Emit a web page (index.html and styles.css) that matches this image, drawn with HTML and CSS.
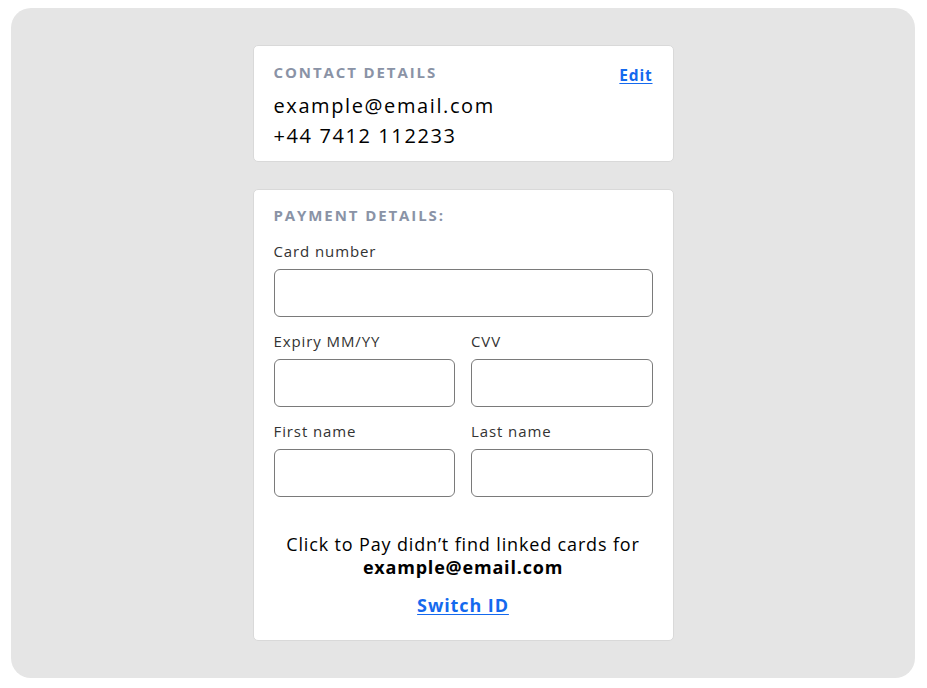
FILE: index.html
```html
<!DOCTYPE html>
<html lang="en">
<head>
<meta charset="utf-8">
<title>Checkout</title>
<link rel="stylesheet" href="styles.css">
</head>
<body>
<div class="frame">
  <section class="card contact">
    <div class="contact-head">
      <h2 class="section-title">CONTACT DETAILS</h2>
      <a class="link edit" href="#">Edit</a>
    </div>
    <p class="contact-line">example@email.com</p>
    <p class="contact-line">+44 7412 112233</p>
  </section>

  <section class="card payment">
    <h2 class="section-title">PAYMENT DETAILS:</h2>
    <div class="field">
      <label class="field-label">Card number</label>
      <div class="input"></div>
    </div>
    <div class="row">
      <div class="field">
        <label class="field-label">Expiry MM/YY</label>
        <div class="input"></div>
      </div>
      <div class="field">
        <label class="field-label">CVV</label>
        <div class="input"></div>
      </div>
    </div>
    <div class="row">
      <div class="field">
        <label class="field-label">First name</label>
        <div class="input"></div>
      </div>
      <div class="field">
        <label class="field-label">Last name</label>
        <div class="input"></div>
      </div>
    </div>
    <p class="notice">Click to Pay didn’t find linked cards for<br><strong>example@email.com</strong></p>
    <a class="link switch" href="#">Switch ID</a>
  </section>
</div>
</body>
</html>
```

FILE: styles.css
```css
* { box-sizing: border-box; }
html, body { margin: 0; padding: 0; background: #ffffff; }
body {
  font-family: "Open Sans", "Noto Sans", "Liberation Sans", sans-serif;
  color: #000;
}
.frame {
  margin: 8px 12px 0 11px;
  height: 670px;
  background: #e5e5e5;
  border-radius: 20px;
  padding-top: 37px;
  display: flex;
  flex-direction: column;
  align-items: center;
  gap: 27px;
}
.card {
  width: 421px;
  background: #fff;
  border: 1px solid #d9d9d9;
  border-radius: 5px;
  padding: 0 20px;
}
.contact { height: 117px; padding-top: 16px; }
.contact-head {
  display: flex;
  justify-content: space-between;
  align-items: flex-start;
}
.section-title {
  margin: 0;
  font-size: 15px;
  font-weight: 700;
  letter-spacing: 1.9px;
  color: #8a93a6;
  line-height: 20px;
}
.link {
  color: #1469ee;
  font-weight: 700;
  text-decoration: underline;
  text-underline-offset: 2px;
}
.edit { font-size: 15.5px; line-height: 20px; margin-top: 3px; letter-spacing: 0.8px; }
.contact-line {
  margin: 0;
  font-size: 20px;
  line-height: 30px;
  letter-spacing: 1.6px;
}
.contact-head + .contact-line { margin-top: 6px; }
.payment { height: 452px; padding-top: 15px; display: flex; flex-direction: column; }
.payment .section-title { margin-bottom: 16px; }
.field { display: flex; flex-direction: column; }
.row .field { flex: 1; }
.field-label {
  font-size: 15px;
  color: #333;
  line-height: 20px;
  margin-bottom: 8px;
  letter-spacing: 0.9px;
}
.input {
  height: 48px;
  border: 1px solid #7a7a7a;
  border-radius: 6px;
}
.row { display: flex; gap: 16px; margin-top: 14px; }
.notice {
  margin: 36px 0 0;
  text-align: center;
  font-size: 18px;
  line-height: 23px;
  letter-spacing: 0.85px;
}
.notice strong { font-weight: 700; letter-spacing: 0.8px; }
.switch {
  align-self: center;
  margin-top: 14px;
  font-size: 18px;
  line-height: 24px;
  letter-spacing: 0.9px;
}
```
